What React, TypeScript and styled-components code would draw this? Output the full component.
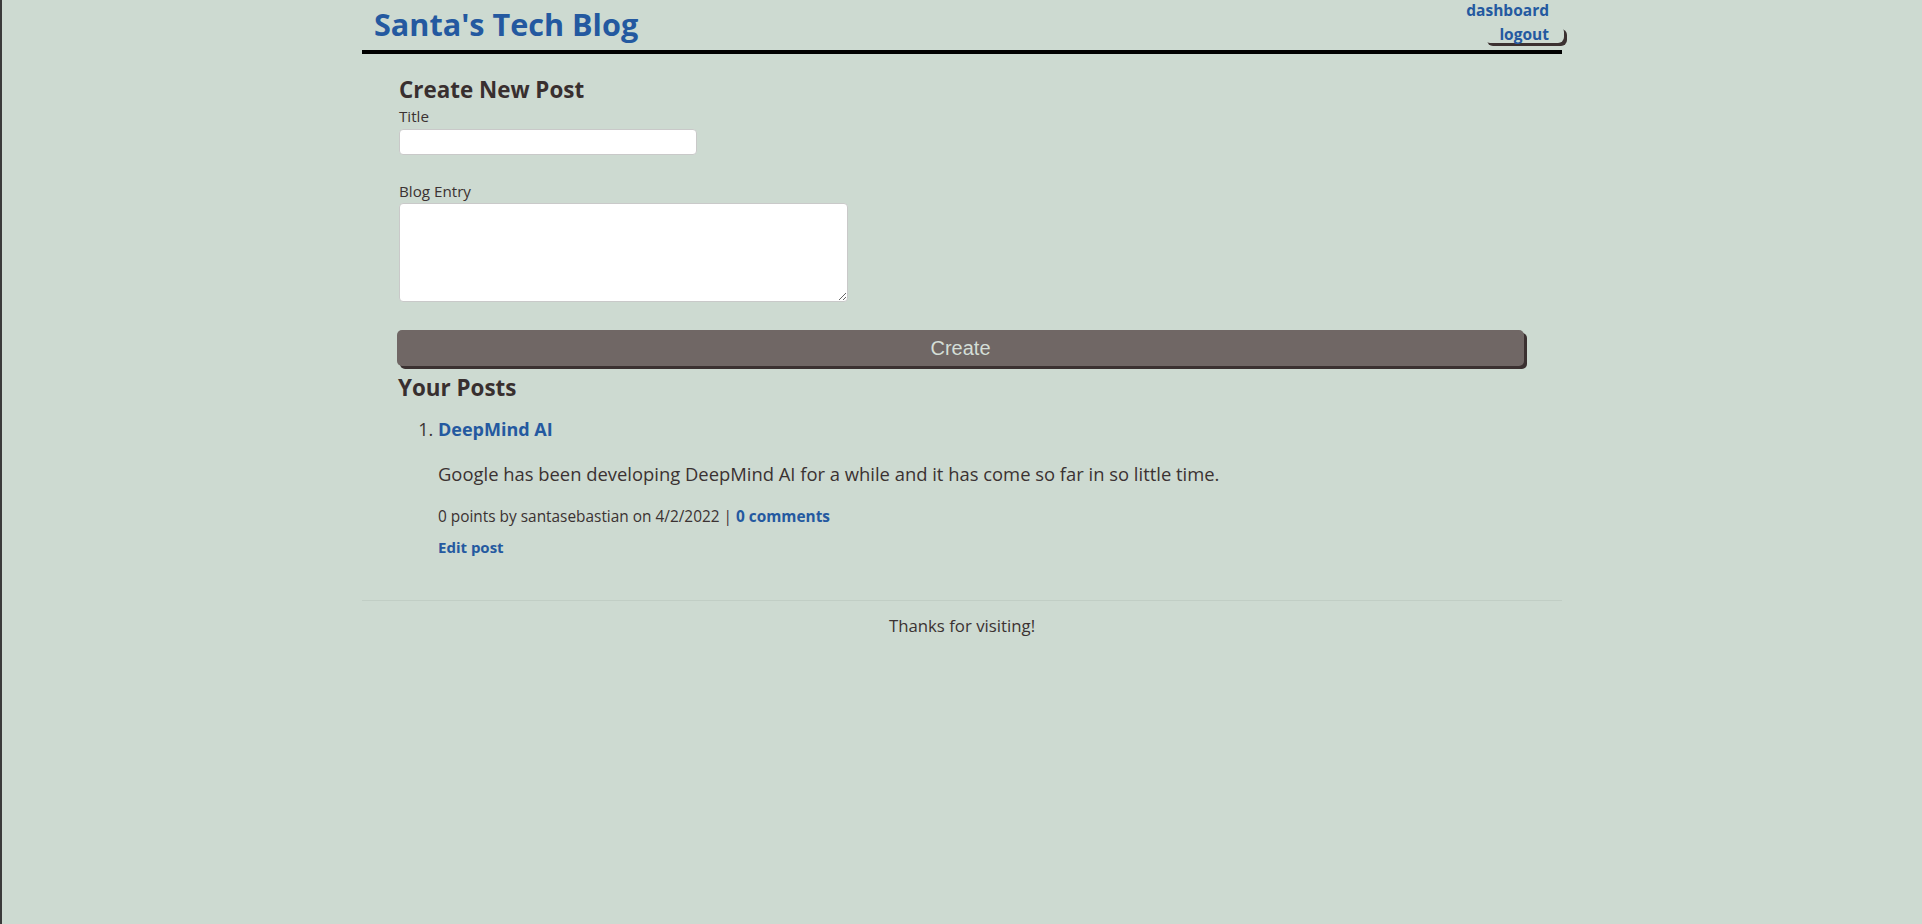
import React from "react";
import styled, { createGlobalStyle } from "styled-components";

const GlobalStyle = createGlobalStyle`
  html {
    background: #cddad1;
  }
  body {
    margin: 0;
    min-height: 100vh;
    border-left: 2px solid #3a3a3a;
    background: #cddad1;
    font-family: "Open Sans", "Noto Sans", Arial, sans-serif;
    color: #382f2f;
  }
  * { box-sizing: border-box; }
`;

const Page = styled.div`
  width: 1200px;
  margin: 0 auto;
`;

const Header = styled.header`
  display: flex;
  justify-content: space-between;
  align-items: flex-start;
  height: 54px;
  padding-left: 12px;
  border-bottom: 4px solid #000;
`;

const SiteTitle = styled.h1`
  margin: 0;
  font-size: 30.6px;
  line-height: 48px;
  font-weight: 700;
  color: #2459a0;
`;

const Nav = styled.nav`
  display: flex;
  flex-direction: column;
  align-items: flex-end;
  margin-right: -2px;
`;

const NavLink = styled.a`
  display: block;
  padding: 0 15px;
  font-size: 15.5px;
  line-height: 20px;
  font-weight: 700;
  color: #2459a0;
  text-decoration: none;
`;

const LogoutButton = styled.button`
  display: block;
  margin-top: 6px;
  height: 17px;
  padding: 0 15px;
  border: none;
  border-radius: 6px;
  background: transparent;
  box-shadow: 3px 3px 0 #3b3131;
  font-family: inherit;
  font-size: 15.5px;
  line-height: 15px;
  font-weight: 700;
  color: #2459a0;
  cursor: pointer;
`;

const Main = styled.main`
  padding: 23px 38px 0 35px;
`;

const SectionTitle = styled.h2<{ $indent?: number }>`
  margin: 0;
  padding-left: ${(p) => p.$indent ?? 0}px;
  font-size: 22.4px;
  line-height: 25px;
  font-weight: 700;
  color: #382f2f;
`;

const Form = styled.form`
  display: flex;
  flex-direction: column;
  align-items: flex-start;
`;

const Label = styled.label<{ $gap: number }>`
  display: block;
  margin-top: ${(p) => p.$gap}px;
  padding-left: 2px;
  font-size: 15.2px;
  line-height: 19px;
  color: #3b3232;
`;

const TextInput = styled.input`
  display: block;
  width: 298px;
  height: 26px;
  margin: 3px 0 0 2px;
  border: 1px solid #c9c9c9;
  border-radius: 4px;
  background: #fff;
  font-family: inherit;
  font-size: 15px;
`;

const TextArea = styled.textarea`
  display: block;
  width: 449px;
  height: 99px;
  margin: 2px 0 0 2px;
  border: 1px solid #c9c9c9;
  border-radius: 4px;
  background: #fff;
  font-family: inherit;
  font-size: 15px;
`;

const CreateButton = styled.button`
  display: block;
  width: 1127px;
  height: 36px;
  margin-top: 28px;
  border: none;
  border-radius: 5px;
  background: #706765;
  box-shadow: 3px 3px 0 #3b3131;
  font-family: "Liberation Sans", Arial, sans-serif;
  font-size: 20px;
  color: #d4ded7;
  cursor: pointer;
`;

const PostsSection = styled.section`
  margin-top: 9px;
  padding-left: 1px;
`;

const PostList = styled.ol`
  margin: 18px 0 0;
  padding-left: 40px;
  font-size: 18px;
  color: #3b3232;
`;

const PostItem = styled.li`
  line-height: 22px;
`;

const PostTitle = styled.a`
  font-size: 18px;
  font-weight: 700;
  color: #2459a0;
  text-decoration: none;
`;

const PostBody = styled.p`
  margin: 23px 0 0;
  font-size: 18.4px;
  line-height: 22px;
  color: #3b3232;
`;

const Meta = styled.p`
  margin: 23px 0 0;
  font-size: 15.4px;
  line-height: 18px;
  color: #3b3232;
`;

const MetaLink = styled.a`
  font-weight: 700;
  color: #2459a0;
  text-decoration: none;
`;

const EditLink = styled.a`
  display: block;
  margin-top: 12px;
  font-size: 15px;
  line-height: 18px;
  font-weight: 700;
  color: #2459a0;
  text-decoration: none;
`;

const Footer = styled.footer`
  margin-top: 44px;
  padding-top: 15px;
  border-top: 1px solid #c1cec5;
  text-align: center;
  font-size: 16.8px;
  line-height: 20px;
  color: #3b3232;
`;

export default function App() {
  return (
    <>
      <GlobalStyle />
      <Page>
        <Header>
          <SiteTitle>Santa's Tech Blog</SiteTitle>
          <Nav>
            <NavLink href="#">dashboard</NavLink>
            <LogoutButton type="button">logout</LogoutButton>
          </Nav>
        </Header>
        <Main>
          <Form onSubmit={(e) => e.preventDefault()}>
            <SectionTitle $indent={2}>Create New Post</SectionTitle>
            <Label $gap={5} htmlFor="post-title">Title</Label>
            <TextInput id="post-title" type="text" />
            <Label $gap={27} htmlFor="post-body">Blog Entry</Label>
            <TextArea id="post-body" />
            <CreateButton type="submit">Create</CreateButton>
          </Form>
          <PostsSection>
            <SectionTitle>Your Posts</SectionTitle>
            <PostList>
              <PostItem>
                <PostTitle href="#">DeepMind AI</PostTitle>
                <PostBody>
                  Google has been developing DeepMind AI for a while and it has come so far in so little time.
                </PostBody>
                <Meta>
                  0 points by santasebastian on 4/2/2022 | <MetaLink href="#">0 comments</MetaLink>
                </Meta>
                <EditLink href="#">Edit post</EditLink>
              </PostItem>
            </PostList>
          </PostsSection>
        </Main>
        <Footer>Thanks for visiting!</Footer>
      </Page>
    </>
  );
}
